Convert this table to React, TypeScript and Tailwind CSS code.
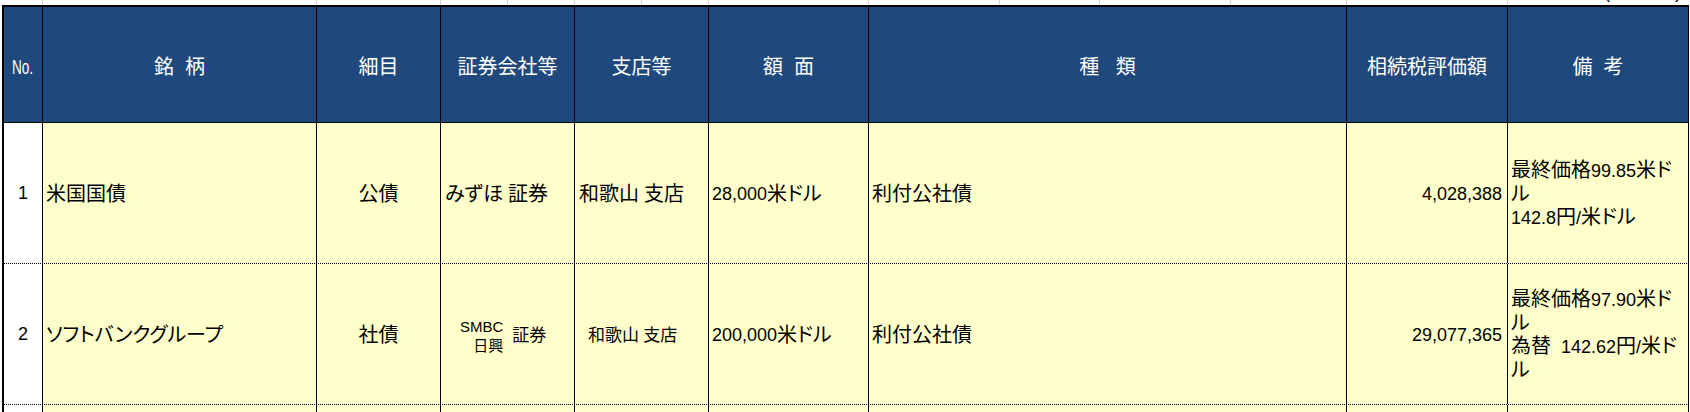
import type { ReactNode } from 'react';

// ASCII runs are drawn a little smaller than the kanji, as in the sheet
function T({ s }: { s: string }) {
  return (
    <>
      {s.split(/([\x20-\x7e]+)/).map((p, i) =>
        /^[\x20-\x7e]+$/.test(p) ? (
          <span key={i} className="text-[0.9em]">
            {p}
          </span>
        ) : (
          p
        ),
      )}
    </>
  );
}

const WIDTHS = [
  'w-[39px]',
  'w-[274px]',
  'w-[124px]',
  'w-[134px]',
  'w-[134px]',
  'w-[160px]',
  'w-[478px]',
  'w-[161px]',
  'w-[181px]',
];

const GRID = [
  'w-[43px]',
  'w-[274px]',
  'w-[124px]',
  'w-[67px]',
  'w-[67px]',
  'w-[67px]',
  'w-[67px]',
  'w-[160px]',
  'w-[131px]',
  'w-[100px]',
  'w-[131px]',
  'w-[116px]',
  'w-[161px]',
];

const HEADS = ['銘  柄', '細目', '証券会社等', '支店等', '額  面', '種   類', '相続税評価額', '備  考'];

type Row = {
  no: string;
  name: string;
  kind: string;
  firm: ReactNode;
  branch: ReactNode;
  face: string;
  type: string;
  value: string;
  note: string[];
};

const ROWS: Row[] = [
  {
    no: '1',
    name: '米国国債',
    kind: '公債',
    firm: (
      <div className="pl-[4px]">
        <T s="みずほ 証券" />
      </div>
    ),
    branch: (
      <div className="pl-[4px]">
        <T s="和歌山 支店" />
      </div>
    ),
    face: '28,000米ドル',
    type: '利付公社債',
    value: '4,028,388',
    note: ['最終価格99.85米ド', 'ル', '142.8円/米ドル'],
  },
  {
    no: '2',
    name: 'ソフトバンクグループ',
    kind: '社債',
    firm: (
      <div className="flex items-center gap-[9px] pl-[19px] pt-[2px]">
        <div className="flex flex-col items-end leading-[19px]">
          <span className="text-[15px]">SMBC</span>
          <span className="text-[15px]">日興</span>
        </div>
        <span className="text-[17px]">証券</span>
      </div>
    ),
    branch: (
      <div className="pl-[13px] pt-[2px] text-[17px]">
        <T s="和歌山 支店" />
      </div>
    ),
    face: '200,000米ドル',
    type: '利付公社債',
    value: '29,077,365',
    note: ['最終価格97.90米ド', 'ル', '為替  142.62円/米ド', 'ル'],
  },
];

export default function App() {
  return (
    <div className="w-[1690px] h-[412px] overflow-hidden bg-white text-black text-[20px] font-['Liberation_Sans','Noto_Sans_CJK_JP',sans-serif] [font-feature-settings:'palt']">
      {/* sheet gridlines above the table */}
      <div className="flex h-[5px]">
        {GRID.map((w, i) => (
          <div key={i} className={`${w} shrink-0 border-r border-[#d4d4d4]`} />
        ))}
        <div className="flex-1 overflow-hidden flex justify-end pr-[9px]">
          <div className="-mt-[22px] leading-[26px] whitespace-pre">
            <T s="(単位:円)" />
          </div>
        </div>
      </div>

      <div className="ml-[2px] w-[1687px] border-l-2 border-t-2 border-black">
        <div className="flex h-[116px] bg-[#1f497d] text-white border-b border-black">
          <div className={`${WIDTHS[0]} shrink-0 border-r border-black flex items-center justify-center pt-[4px]`}>
            <span className="inline-block text-[20px] scale-x-[0.68]">No.</span>
          </div>
          {HEADS.map((h, i) => (
            <div
              key={h}
              className={`${WIDTHS[i + 1]} shrink-0 border-r border-black flex items-center justify-center pt-[4px] whitespace-pre`}
            >
              {h}
            </div>
          ))}
        </div>

        {ROWS.map((r) => (
          <div key={r.no} className="flex h-[141px] border-b border-dotted border-black">
            <div className={`${WIDTHS[0]} shrink-0 border-r border-black flex items-center justify-center bg-white`}>
              <T s={r.no} />
            </div>
            <div className={`${WIDTHS[1]} shrink-0 border-r border-black flex items-center pl-[3px] pt-[2px] bg-[#ffffcc]`}>
              {r.name}
            </div>
            <div className={`${WIDTHS[2]} shrink-0 border-r border-black flex items-center justify-center pt-[2px] bg-[#ffffcc]`}>
              {r.kind}
            </div>
            <div className={`${WIDTHS[3]} shrink-0 border-r border-black flex items-center pt-[2px] bg-[#ffffcc]`}>
              {r.firm}
            </div>
            <div className={`${WIDTHS[4]} shrink-0 border-r border-black flex items-center pt-[2px] bg-[#ffffcc]`}>
              {r.branch}
            </div>
            <div className={`${WIDTHS[5]} shrink-0 border-r border-black flex items-center pl-[3px] pt-[2px] bg-[#ffffcc]`}>
              <T s={r.face} />
            </div>
            <div className={`${WIDTHS[6]} shrink-0 border-r border-black flex items-center pl-[3px] pt-[2px] bg-[#ffffcc]`}>
              {r.type}
            </div>
            <div className={`${WIDTHS[7]} shrink-0 border-r border-black flex items-center justify-end pr-[5px] pt-[2px] bg-[#ffffcc]`}>
              <T s={r.value} />
            </div>
            <div className={`${WIDTHS[8]} shrink-0 border-r border-black flex flex-col justify-center pl-[3px] pt-[2px] leading-[23px] whitespace-pre overflow-hidden bg-[#ffffcc]`}>
              {r.note.map((l, i) => (
                <div key={i}>
                  <T s={l} />
                </div>
              ))}
            </div>
          </div>
        ))}

        <div className="flex h-[20px]">
          {WIDTHS.map((w, i) => (
            <div key={i} className={`${w} shrink-0 border-r border-black ${i === 0 ? 'bg-white' : 'bg-[#ffffcc]'}`} />
          ))}
        </div>
      </div>
    </div>
  );
}
